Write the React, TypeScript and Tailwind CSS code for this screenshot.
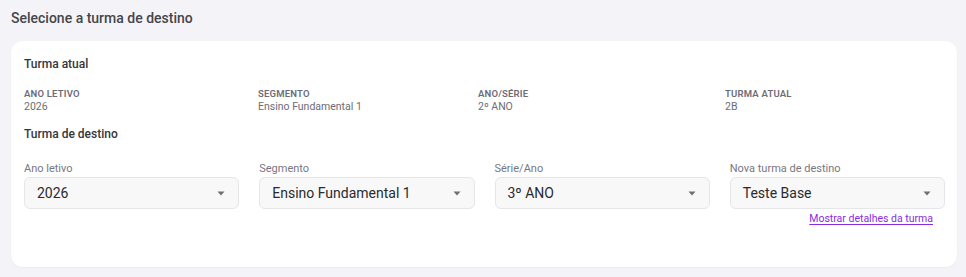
import React from "react";

const Caret = () => (
  <svg width="8" height="5" viewBox="0 0 8 5" className="shrink-0">
    <path d="M0.5 0.5 L7.5 0.5 L4 4.5 Z" fill="#6f6f78" />
  </svg>
);

const Info = ({ label, value, w }: { label: string; value: string; w: string }) => (
  <div className={`${w} flex flex-col`}>
    <span className="text-[9.5px] font-semibold tracking-[0.2px] text-[#6c6c76] leading-[12px]">{label}</span>
    <span className="text-[10.5px] text-[#6c6c76] leading-[13px]">{value}</span>
  </div>
);

const Field = ({ label, value, link }: { label: string; value: string; link?: boolean }) => (
  <div className="flex flex-col">
    <span className="text-[11px] text-[#77777f] leading-[14px] mb-[1px]">{label}</span>
    <div className="h-[32px] rounded-[6px] border border-[#e6e6ea] bg-[#f8f8f9] flex items-center justify-between pl-[12px] pr-[13px]">
      <span className="text-[14px] text-[#2a2a2e]">{value}</span>
      <Caret />
    </div>
    {link && (
      <div className="flex justify-end pr-[12px] mt-[3px]">
        <a className="text-[10.5px] text-[#8a2be2] underline underline-offset-2 decoration-[#8a2be2] leading-[14px] cursor-pointer">
          Mostrar detalhes da turma
        </a>
      </div>
    )}
  </div>
);

export default function App() {
  return (
    <div
      className="w-[966px] h-[277px] bg-[#f4f4f8] pl-[11px] pr-[9px] pt-[9px] pb-[10px] flex flex-col"
      style={{ fontFamily: "Roboto, 'Noto Sans', sans-serif" }}
    >
      <h1 className="text-[14px] font-medium text-[#45454b] leading-[18px] mb-[14px]">Selecione a turma de destino</h1>
      <div className="flex-1 bg-white rounded-[12px] shadow-[0_1px_2px_rgba(0,0,0,0.04)] pl-[13px] pr-[12px] pt-[16px]">
        <h2 className="text-[12px] font-medium text-[#35353a] leading-[15px]">Turma atual</h2>
        <div className="flex mt-[16px]">
          <Info w="w-[234px]" label="ANO LETIVO" value="2026" />
          <Info w="w-[220px]" label="SEGMENTO" value="Ensino Fundamental 1" />
          <Info w="w-[247px]" label="ANO/SÉRIE" value="2º ANO" />
          <Info w="w-[200px]" label="TURMA ATUAL" value="2B" />
        </div>
        <h2 className="text-[12px] font-medium text-[#35353a] leading-[15px] mt-[14px]">Turma de destino</h2>
        <div className="grid grid-cols-4 gap-x-[20px] mt-[20px]">
          <Field label="Ano letivo" value="2026" />
          <Field label="Segmento" value="Ensino Fundamental 1" />
          <Field label="Série/Ano" value="3º ANO" />
          <Field label="Nova turma de destino" value="Teste Base" link />
        </div>
      </div>
    </div>
  );
}
